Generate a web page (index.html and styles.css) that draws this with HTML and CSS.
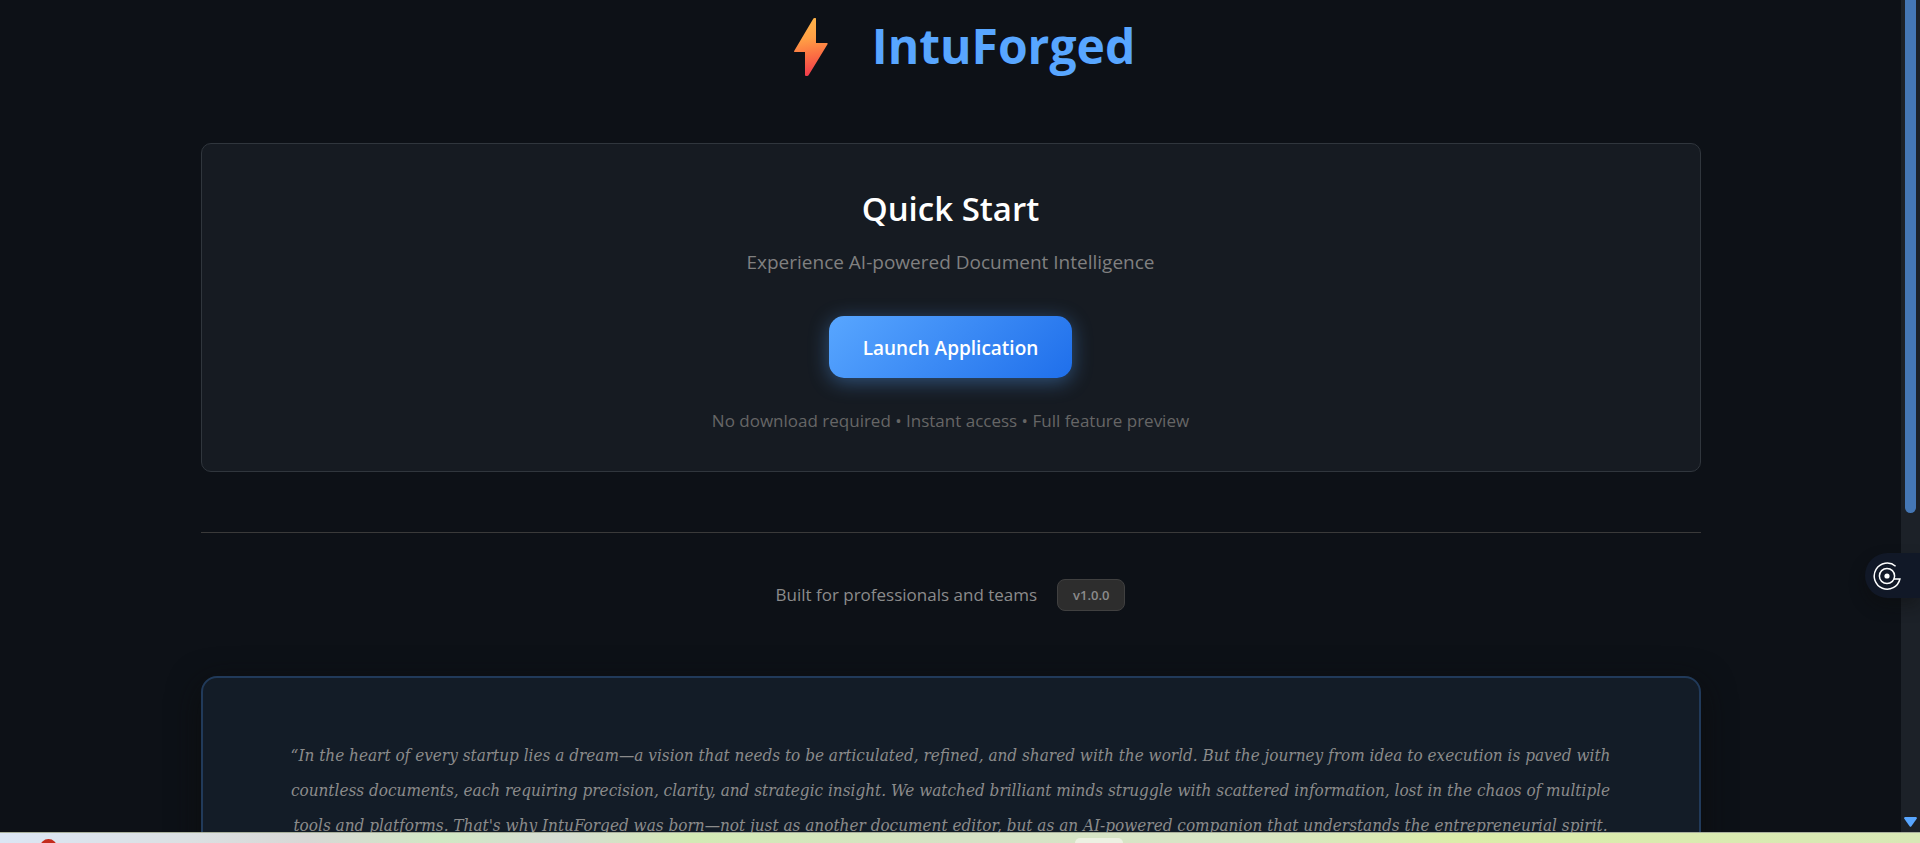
FILE: index.html
```
<!DOCTYPE html>
<html lang="en">
<head>
<meta charset="UTF-8">
<meta name="viewport" content="width=device-width, initial-scale=1">
<title>IntuForged</title>
<link rel="stylesheet" href="styles.css">
</head>
<body>

<div class="window">
  <main class="page">
    <div class="container">

      <header class="brand">
        <svg class="bolt" viewBox="0 0 34 58" aria-hidden="true">
          <defs>
            <linearGradient id="boltFill" x1="0.4" y1="0" x2="0.5" y2="1">
              <stop offset="0" stop-color="#ffb54a"/>
              <stop offset="0.35" stop-color="#ff9f45"/>
              <stop offset="0.65" stop-color="#fb6f43"/>
              <stop offset="1" stop-color="#f03a4c"/>
            </linearGradient>
          </defs>
          <path fill="url(#boltFill)" d="M19.4 0.6Q19.8 0 20.6 0H21.4Q22 0 22 0.7V25H32.8Q34.2 25 33.5 26.2L14.6 57.2Q14 58 13.2 58H12Q11 58 11 57V34H1Q-0.4 34 0.3 32.8Z"/>
        </svg>
        <h1>IntuForged</h1>
      </header>

      <section class="quick-start">
        <h2>Quick Start</h2>
        <p class="tagline">Experience AI-powered Document Intelligence</p>
        <button class="launch" type="button">Launch Application</button>
        <p class="note">No download required • Instant access • Full feature preview</p>
      </section>

      <div class="built">
        <span>Built for professionals and teams</span>
        <span class="version">v1.0.0</span>
      </div>

      <section class="story">
        <p>“In the heart of every startup lies a dream—a vision that needs to be articulated, refined, and shared with the world. But the journey from idea to execution is paved with<br>
        countless documents, each requiring precision, clarity, and strategic insight. We watched brilliant minds struggle with scattered information, lost in the chaos of multiple<br>
        tools and platforms. That's why IntuForged was born—not just as another document editor, but as an AI-powered companion that understands the entrepreneurial spirit.</p>
      </section>

    </div>
  </main>

  <div class="scrollbar" aria-hidden="true">
    <div class="thumb"></div>
    <svg class="arrow" viewBox="0 0 13 10"><path fill="#58a6ff" d="M1 0H12Q13.4 0.4 12.7 1.8L7.4 9.2Q6.5 10.4 5.6 9.2L0.3 1.8Q-0.4 0.4 1 0Z"/></svg>
  </div>

  <button class="side-tab" type="button" aria-label="Open assistant">
    <svg viewBox="0 0 28 28" fill="none" stroke="#fff" stroke-width="1.5" aria-hidden="true">
      <path d="M22.6 4.2A13 13 0 1 0 26.9 17H20.5"/>
      <circle cx="14" cy="14" r="7.6"/>
      <circle cx="14" cy="14" r="2.6" fill="#fff" stroke="none"/>
    </svg>
  </button>
</div>

<div class="taskbar" aria-hidden="true">
  <span class="dot"></span>
  <span class="tile"></span>
</div>

</body>
</html>
```
FILE: styles.css
```
*{box-sizing:border-box;}
body{
  margin:0;height:100vh;display:flex;flex-direction:column;overflow:hidden;
  background:#0d1117;color:#8b8b8b;
  font-family:'Segoe UI','Open Sans',sans-serif;
}
h1,h2,p{margin:0;}

.window{position:relative;flex:1;min-height:0;display:flex;}
.page{flex:1;overflow:hidden;}
.container{max-width:1500px;margin:0 auto;}

/* — brand — */
.brand{display:flex;align-items:center;justify-content:center;gap:44px;height:94px;margin-bottom:49px;padding-left:28px;}
.bolt{width:34px;height:58px;}
h1{font-size:48px;line-height:60px;font-weight:700;color:#58a6ff;padding-bottom:2px;}

/* — quick start card — */
.quick-start{
  display:flex;flex-direction:column;align-items:center;
  padding:40px 40px 36px;text-align:center;
  background:#161b22;border:1px solid #30363d;border-radius:10px;
}
h2{font-size:33px;line-height:50px;font-weight:600;color:#fff;margin-bottom:13px;}
.tagline{font-size:19px;line-height:30px;color:#808080;margin-bottom:39px;}
.launch{
  height:62px;padding:2px 34px 0;border:0;border-radius:15px;cursor:pointer;
  font:600 19px/30px 'Segoe UI','Open Sans',sans-serif;color:#fff;
  background:linear-gradient(135deg,#58a6ff,#1f6feb);
  box-shadow:0 4px 20px rgba(88,166,255,.4);
}
.note{font-size:17px;line-height:28px;color:#666;margin-top:29px;}

/* — version line — */
.built{
  display:flex;align-items:center;justify-content:center;gap:20px;
  margin-top:60px;padding:46px 0 65px;border-top:1px solid #3a3a3a;
  font-size:17px;line-height:32px;
}
.version{
  padding:0 15px;font-size:13px;line-height:30px;font-weight:600;
  background:#2d2d2d;border:1px solid #404040;border-radius:8px;
}

/* — story card — */
.story{
  padding:60px 0;text-align:center;
  background:#131c27;border:2px solid #213a5a;border-radius:16px;
  box-shadow:0 8px 32px rgba(13,13,13,.8);
}
.story p{font:italic 17px/35px Georgia,'DejaVu Serif Condensed','DejaVu Serif',serif;white-space:nowrap;}

/* — scrollbar — */
.scrollbar{width:19px;display:flex;flex-direction:column;align-items:center;justify-content:space-between;background:#1c2128;padding-bottom:5px;}
.thumb{width:11px;height:62%;background:#4577b5;border-radius:0 0 6px 6px;}
.arrow{width:13px;height:10px;}

.side-tab{
  position:absolute;right:0;top:553px;width:55px;height:45px;padding:0 0 0 8px;
  border:0;border-radius:23px 0 0 23px;background:#111827;cursor:pointer;
  display:flex;align-items:center;box-shadow:0 8px 16px rgba(12,12,12,.4);
}
.side-tab svg{width:28px;height:28px;}

/* — desktop strip — */
.taskbar{
  position:relative;height:11px;overflow:hidden;border-top:1px solid #a9b09c;
  background:linear-gradient(90deg,#dbe6f4 0%,#dbe0e2 10%,#d8d8d6 16%,#d1e8c4 23%,#d6dcd4 29%,#d3eab5 36%,#d6e2c6 50%,#d8e6c6 65%,#dcedaa 76%,#d8e8b6 100%);
}
.dot{position:absolute;left:40px;top:6px;width:17px;height:17px;border-radius:50%;background:#c42b1c;}
.tile{position:absolute;left:56%;top:5px;width:48px;height:40px;border-radius:5px;background:#edf1e3;}
```
